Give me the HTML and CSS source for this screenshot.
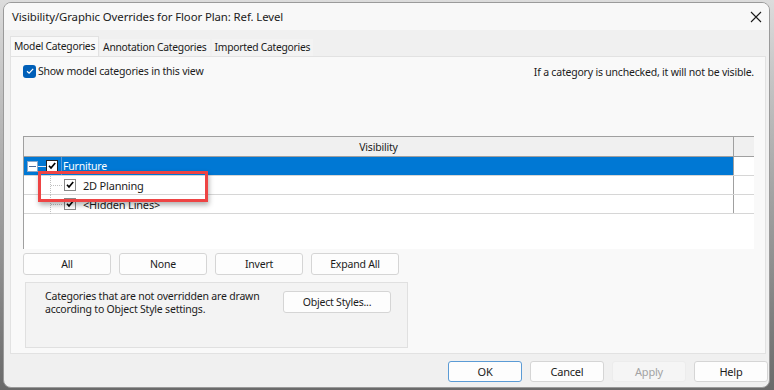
FILE: index.html
```html
<!DOCTYPE html>
<html lang="en">

<head>
    <meta charset="UTF-8">
    <title>Visibility/Graphic Overrides</title>
    <link rel="stylesheet" href="styles.css">
</head>

<body>
    <div class="dialog">
        <header class="titlebar">
            <span class="title">Visibility/Graphic Overrides for Floor Plan: Ref. Level</span>
            <svg class="close" viewBox="0 0 12 12" width="12" height="12">
                <path d="M1 1L11 11M11 1L1 11" stroke="#1a1a1a" stroke-width="1.1" fill="none" />
            </svg>
        </header>
        <nav class="tabs">
            <span class="tab active">Model Categories</span>
            <span class="tab">Annotation Categories</span>
            <span class="tab">Imported Categories</span>
        </nav>
        <section class="panel">
            <div class="panel-top">
                <label class="show">
                    <span class="check-blue">
                        <svg viewBox="0 0 12 12" width="12" height="12">
                            <path d="M3 6.2L5.1 8.2L9.2 3.9" stroke="#fff" stroke-width="1.2" fill="none" />
                        </svg>
                    </span>
                    Show model categories in this view
                </label>
                <span class="hint">If a category is unchecked, it will not be visible.</span>
            </div>

            <div class="grid">
                <div class="row head">
                    <div class="cell name">Visibility</div>
                    <div class="cell side"></div>
                </div>
                <div class="row selected">
                    <div class="cell name">
                        <span class="expander"></span>
                        <span class="tree-h"></span>
                        <span class="box"><svg viewBox="0 0 10 10" width="10" height="10"><path d="M2 4.8L4 7L8.2 2" stroke="#000" stroke-width="1.7" fill="none" /></svg></span>
                        <span class="sep"></span>
                        <span class="label">Furniture</span>
                    </div>
                    <div class="cell side"></div>
                </div>
                <div class="row child">
                    <div class="cell name">
                        <span class="tree-l"></span>
                        <span class="box"><svg viewBox="0 0 10 10" width="10" height="10"><path d="M2 4.8L4 7L8.2 2" stroke="#000" stroke-width="1.7" fill="none" /></svg></span>
                        <span class="label">2D Planning</span>
                    </div>
                    <div class="cell side"></div>
                </div>
                <div class="row child last">
                    <div class="cell name">
                        <span class="tree-l"></span>
                        <span class="box"><svg viewBox="0 0 10 10" width="10" height="10"><path d="M2 4.8L4 7L8.2 2" stroke="#000" stroke-width="1.7" fill="none" /></svg></span>
                        <span class="label">&lt;Hidden Lines&gt;</span>
                    </div>
                    <div class="cell side"></div>
                </div>
                <div class="highlight"></div>
            </div>

            <div class="actions">
                <button>All</button>
                <button>None</button>
                <button>Invert</button>
                <button>Expand All</button>
            </div>

            <div class="group">
                <p>Categories that are not overridden are drawn<br>according to Object Style settings.</p>
                <button class="wide">Object Styles...</button>
            </div>
        </section>
        <footer class="footer">
            <button class="default">OK</button>
            <button>Cancel</button>
            <button disabled>Apply</button>
            <button>Help</button>
        </footer>
    </div>
</body>

</html>
```

FILE: styles.css
```css
html,
body {
    margin: 0;
    height: 390px;
    overflow: hidden;
}

body {
    background: linear-gradient(#dcdcdc, #6a6a6a);
    font-family: "Noto Sans", "Open Sans", sans-serif;
    font-size: 10.5px;
    letter-spacing: -0.2px;
    color: #1b1b1b;
    padding: 2px 4px 0 3px;
    box-sizing: border-box;
}

.dialog {
    width: 767px;
    height: 386px;
    background: #f0f0f0;
    border: 1px solid #9a9a9a;
    border-radius: 8px;
    box-sizing: border-box;
    display: flex;
    flex-direction: column;
    overflow: hidden;
}

.titlebar {
    height: 27px;
    flex: none;
    display: flex;
    align-items: center;
    justify-content: space-between;
    padding: 0 7px 0 8px;
    background: #f8f8f8;
    font-size: 11.4px;
    letter-spacing: -0.1px;
}

.tabs {
    display: flex;
    align-items: flex-end;
    height: 26px;
    padding-left: 6px;
    flex: none;
}

.tab {
    height: 17px;
    line-height: 17px;
    padding: 0 3px;
    margin-right: 2px;
    background: #f3f3f3;
    font-size: 10.3px;
    letter-spacing: -0.25px;
}

.tab.active {
    height: 19px;
    line-height: 18px;
    background: #f9f9f9;
    border: 1px solid #e2e2e2;
    border-bottom: none;
    margin-right: 1px;
}

.panel {
    margin: 0 3px 0 6px;
    height: 298px;
    flex: none;
    background: #f9f9f9;
    border: 1px solid #e2e2e2;
    box-sizing: border-box;
}

.panel-top {
    height: 79px;
    display: flex;
    justify-content: space-between;
    align-items: flex-start;
    padding: 7px 11px 0 12px;
    box-sizing: border-box;
}

.show {
    display: flex;
    align-items: center;
    gap: 2px;
}

.check-blue {
    width: 13px;
    height: 13px;
    border-radius: 3px;
    background: #005fb8;
    display: flex;
    align-items: center;
    justify-content: center;
}

.hint {
    margin-top: 1px;
}

.grid {
    position: relative;
    margin-left: 12px;
    width: 731px;
    height: 113px;
    background: #fff;
    border-left: 1px solid #a0a0a0;
    border-top: 1px solid #a0a0a0;
    box-sizing: border-box;
}

.row {
    display: flex;
    height: 19px;
    border-bottom: 1px solid #d6d6d6;
    box-sizing: border-box;
}

.row.head {
    height: 20px;
    background: #f0f0f0;
    border-bottom: 1px solid #a0a0a0;
}

.cell {
    display: flex;
    align-items: center;
    box-sizing: border-box;
}

.cell.name {
    flex: 1;
    position: relative;
}

.cell.side {
    width: 21px;
    border-left: 1px solid #a0a0a0;
}

.head .name {
    justify-content: center;
}

.head .side {
    background: #f0f0f0;
}

.selected .name {
    background: #0078d4;
    color: #fff;
}

.expander {
    width: 9px;
    height: 9px;
    margin-left: 3px;
    background: #fff;
    border: 1px solid #8fa8c8;
    position: relative;
}

.expander::after {
    content: "";
    position: absolute;
    left: 1px;
    right: 1px;
    top: 4px;
    height: 1px;
    background: #4a6a9a;
}

.tree-h {
    width: 8px;
    height: 1px;
    background: #dfe8f5;
}

.box {
    width: 10px;
    height: 10px;
    background: #fff;
    border: 1px solid #888;
    display: flex;
}

.selected .box {
    border-color: #222;
}

.sep {
    width: 1px;
    align-self: stretch;
    background: #5a9ad8;
    margin-left: 3px;
}

.selected .label {
    margin-left: 1px;
}

.child .tree-l {
    width: 11px;
    height: 19px;
    margin-left: 26px;
    margin-right: 2px;
    border-left: 1px dotted #c0c0c0;
    position: relative;
}

.child .tree-l::after {
    content: "";
    position: absolute;
    left: 0;
    right: 0;
    top: 9px;
    border-top: 1px dotted #c0c0c0;
}

.child .label {
    margin-left: 7px;
    font-size: 11px;
}

.highlight {
    position: absolute;
    left: 14px;
    top: 34px;
    width: 170px;
    height: 31px;
    border: 3px solid #ee4444;
    box-sizing: border-box;
    box-shadow: 1px 3px 5px rgba(0, 0, 0, .3);
}

button {
    font-family: inherit;
    font-size: 10.5px;
    letter-spacing: -0.2px;
    color: #1b1b1b;
    background: #fdfdfd;
    border: 1px solid #d5d5d5;
    border-radius: 3px;
    padding: 0 0 1px;
    height: 22px;
}

.actions {
    display: flex;
    gap: 8px;
    margin: 4px 0 0 12px;
}

.actions button {
    width: 88px;
}

.group {
    margin: 7px 0 0 14px;
    width: 383px;
    height: 66px;
    border: 1px solid #e0e0e0;
    background: #f3f3f3;
    box-sizing: border-box;
    display: flex;
    align-items: flex-start;
    padding: 7px 0 0 19px;
}

.group p {
    margin: 0;
    line-height: 13px;
    width: 238px;
    white-space: nowrap;
}

.group .wide {
    width: 108px;
    margin-top: 1px;
}

.footer {
    display: flex;
    justify-content: flex-end;
    gap: 8px;
    padding: 7px 1px 0 0;
}

.footer button {
    width: 74px;
    height: 21px;
    font-size: 11px;
}

.footer .default {
    border-color: #5b9bd5;
}

.footer button:disabled {
    background: #f5f5f5;
    color: #a3a3a3;
    border-color: #ececec;
}
```
